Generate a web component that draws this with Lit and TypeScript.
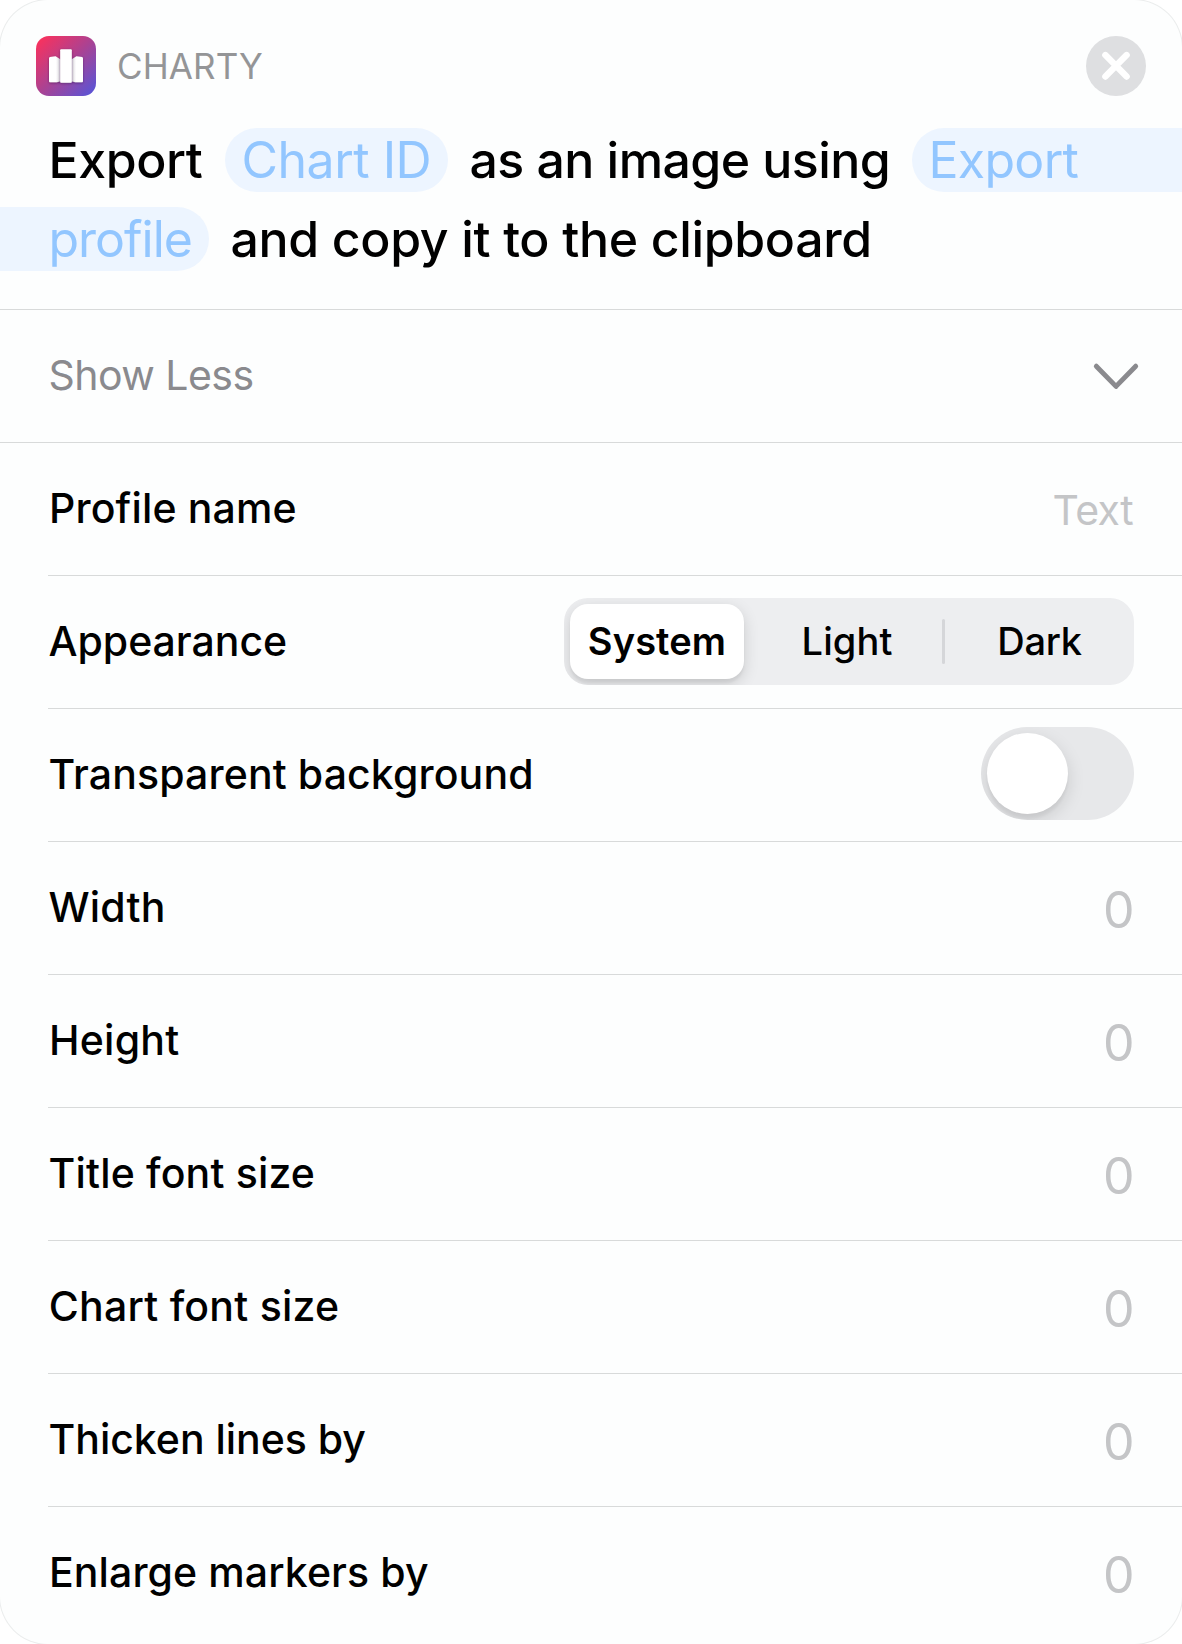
import { LitElement, html, css, svg, nothing } from "lit";
import { customElement, property, state } from "lit/decorators.js";
import { styleMap } from "lit/directives/style-map.js";
import { classMap } from "lit/directives/class-map.js";

interface Field {
  label: string;
  kind: "text" | "number" | "segments" | "switch";
  tracking: number;
  /** Optical indent of the first letter, in px. */
  indent: number;
}

const FIELDS: Field[] = [
  { label: "Profile name", kind: "text", tracking: 0.15, indent: 1 },
  { label: "Appearance", kind: "segments", tracking: -0.03, indent: 0.5 },
  { label: "Transparent background", kind: "switch", tracking: 0.12, indent: 0.5 },
  { label: "Width", kind: "number", tracking: 0.2, indent: 0.5 },
  { label: "Height", kind: "number", tracking: 0.25, indent: 1 },
  { label: "Title font size", kind: "number", tracking: 0.18, indent: 0.5 },
  { label: "Chart font size", kind: "number", tracking: 0.25, indent: 0.7 },
  { label: "Thicken lines by", kind: "number", tracking: -0.02, indent: 0.5 },
  { label: "Enlarge markers by", kind: "number", tracking: 0.1, indent: 1 },
];

@customElement("charty-icon")
class ChartyIcon extends LitElement {
  static styles = css`
    :host { display: block; width: 60px; height: 60px; }
    svg { display: block; }
  `;
  render() {
    return html`<svg width="60" height="60" viewBox="0 0 60 60">
      ${svg`
      <defs>
        <linearGradient id="bg" x1="0" y1="0" x2="1" y2="1">
          <stop offset="0.04" stop-color="#fb315c" />
          <stop offset="0.5" stop-color="#ab4292" />
          <stop offset="0.96" stop-color="#5954d6" />
        </linearGradient>
        <linearGradient id="left" x1="0" x2="1">
          <stop offset="0.6" stop-color="#fff" />
          <stop offset="1" stop-color="#d5d0d8" />
        </linearGradient>
        <linearGradient id="right" x1="1" x2="0">
          <stop offset="0.6" stop-color="#fff" />
          <stop offset="1" stop-color="#d5d0d8" />
        </linearGradient>
        <filter id="shade" x="-30%" y="-30%" width="160%" height="160%">
          <feDropShadow dx="0" dy="0.8" stdDeviation="0.9" flood-color="#2a1040" flood-opacity="0.5" />
        </filter>
      </defs>
      <rect width="60" height="60" rx="13" fill="url(#bg)" />
      <g filter="url(#shade)">
        <path d="M13 22.2Q13 21.3 14 21.1L19.6 20.2L24.6 23.4V45.2L20.8 46.2H14Q13 46.2 13 45.2Z" fill="url(#left)" />
        <path d="M47 22.2Q47 21.3 46 21.1L40.4 20.2L35.4 23.4V45.2L39.2 46.2H46Q47 46.2 47 45.2Z" fill="url(#right)" />
      </g>
      <rect x="24.2" y="13.3" width="11.6" height="33.4" rx="0.9" fill="#fff" filter="url(#shade)" />`}
    </svg>`;
  }
}

@customElement("segmented-control")
class SegmentedControl extends LitElement {
  static styles = css`
    :host { display: block; padding-bottom: 2px; }
    .track {
      box-sizing: border-box;
      display: grid;
      grid-template-columns: 174px 8px 190px 3px 189px;
      align-items: center;
      width: 570px;
      height: 87px;
      padding: 6px 0 6px 6px;
      border-radius: 24px;
      background: #edeef0;
      overflow: hidden;
    }
    .segment {
      grid-row: 1;
      box-sizing: border-box;
      height: 75px;
      line-height: 75px;
      font-size: 38px;
      font-weight: 500;
      text-align: center;
      color: #000;
    }
    .first { grid-column: 1; }
    .second { grid-column: 3; letter-spacing: 0.1px; }
    .third { grid-column: 5; letter-spacing: -0.25px; }
    .selected {
      border-radius: 18px;
      background: #fff;
      font-weight: 600;
      letter-spacing: 0.1px;
      box-shadow: 0 5px 16px rgba(0, 0, 0, 0.14), 0 4px 3px rgba(0, 0, 0, 0.05);
    }
    .divider { grid-column: 4; grid-row: 1; height: 45px; border-radius: 2px; background: #d5d6d9; }
  `;
  @state() private selected = 0;
  render() {
    const names = ["System", "Light", "Dark"];
    return html`<div class="track">
      ${names.map(
        (name, i) => html`<div
          class=${classMap({ segment: true, first: i === 0, second: i === 1, third: i === 2, selected: i === this.selected })}
          @click=${() => (this.selected = i)}
        >${name}</div>`,
      )}
      <div class="divider"></div>
    </div>`;
  }
}

@customElement("toggle-switch")
class ToggleSwitch extends LitElement {
  static styles = css`
    :host { display: block; padding-bottom: 4px; }
    .track {
      box-sizing: border-box;
      display: flex;
      align-items: center;
      width: 153px;
      height: 93px;
      padding: 6px;
      border-radius: 47px;
      background: #e7e8ea;
      overflow: hidden;
    }
    .knob {
      width: 81px;
      height: 81px;
      border-radius: 50%;
      background: #fff;
      box-shadow: 0 6px 18px rgba(0, 0, 0, 0.13), 0 5px 3px rgba(0, 0, 0, 0.04);
    }
  `;
  render() {
    return html`<div class="track"><div class="knob"></div></div>`;
  }
}

@customElement("field-row")
class FieldRow extends LitElement {
  static styles = css`
    :host { display: block; }
    .row {
      box-sizing: border-box;
      display: flex;
      align-items: center;
      justify-content: space-between;
      height: 133px;
      margin-left: 48px;
      padding-right: 48px;
      border-bottom: 1px solid #d8dada;
    }
    .last { border-bottom-color: transparent; }
    .label { padding-bottom: 2px; font-size: 41px; font-weight: 500; line-height: 50px; color: #000; white-space: nowrap; }
    .placeholder { color: #c4c5c7; line-height: 60px; }
    .text { padding: 2px 1px 0 0; font-size: 41px; letter-spacing: -0.6px; }
    .number { padding-top: 4px; font-size: 50px; letter-spacing: -0.5px; }
  `;
  @property({ attribute: false }) field!: Field;
  @property({ type: Boolean }) last = false;

  private control() {
    switch (this.field.kind) {
      case "text": return html`<span class="placeholder text">Text</span>`;
      case "number": return html`<span class="placeholder number">0</span>`;
      case "segments": return html`<segmented-control></segmented-control>`;
      case "switch": return html`<toggle-switch></toggle-switch>`;
      default: return nothing;
    }
  }
  render() {
    const { label, tracking, indent } = this.field;
    return html`<div class=${classMap({ row: true, last: this.last })}>
      <span class="label" style=${styleMap({ letterSpacing: `${tracking}px`, paddingLeft: `${indent}px` })}>${label}</span>
      ${this.control()}
    </div>`;
  }
}

@customElement("app-root")
class AppRoot extends LitElement {
  static styles = css`
    :host {
      display: block;
      height: 1644px;
      overflow: hidden;
      background: #fff;
      font-family: Inter, "Liberation Sans", sans-serif;
    }
    .card {
      display: flex;
      flex-direction: column;
      height: 1644px;
      border-radius: 48px;
      background: #fdfefe;
      box-shadow: 0 0 0 1px #ebeded;
    }
    .header { display: flex; align-items: center; height: 60px; padding: 36px 36px 0; }
    .app-name { flex: 1; margin-left: 21px; font-size: 35px; letter-spacing: 0.1px; color: #949597; }
    .close { display: block; }
    .summary {
      display: grid;
      row-gap: 15px;
      padding-top: 32px;
      height: 181px;
      align-content: start;
      border-bottom: 1px solid #d8dada;
      font-size: 50px;
      line-height: 64px;
      font-weight: 500;
      color: #000;
      white-space: pre;
    }
    .line { display: grid; height: 64px; }
    .line-one { grid-template-columns: 177px 223px 464px 1fr; padding-left: 48px; }
    .line-two { grid-template-columns: 209px 1fr; }
    .word { padding-left: 0.5px; letter-spacing: -0.4px; }
    .middle { padding-left: 21.5px; letter-spacing: -0.56px; }
    .tail { padding-left: 21.5px; letter-spacing: -0.34px; }
    .token { background: #edf5ff; color: #92c6ff; font-weight: 400; }
    .chart { padding-left: 16.5px; border-radius: 32px; letter-spacing: -0.5px; }
    .profile-start { padding-left: 16.5px; border-radius: 32px 0 0 32px; letter-spacing: -0.7px; }
    .profile-end { padding-left: 48.5px; border-radius: 0 32px 32px 0; letter-spacing: -1px; }
    .disclosure {
      box-sizing: border-box;
      display: flex;
      align-items: center;
      justify-content: space-between;
      height: 133px;
      padding: 0 42px 0 48px;
      border-bottom: 1px solid #d8dada;
      color: #8a8a8e;
    }
    .less { padding: 0 0 2px 0.5px; font-size: 41px; line-height: 50px; letter-spacing: -0.53px; }
    .chevron { display: block; }
  `;
  render() {
    return html`<div class="card">
      <div class="header">
        <charty-icon></charty-icon>
        <span class="app-name">CHARTY</span>
        <svg class="close" width="60" height="60" viewBox="0 0 60 60">
          <circle cx="30" cy="30" r="30" fill="#dedfe1" />
          <path d="M19.4 19.1L40.6 40.5M40.6 19.1L19.4 40.5" stroke="#fff" stroke-width="6.4" stroke-linecap="round" />
        </svg>
      </div>
      <div class="summary">
        <div class="line line-one"><span class="word">Export</span><span class="token chart">Chart ID</span><span class="middle">as an image using</span><span class="token profile-start">Export</span></div>
        <div class="line line-two"><span class="token profile-end">profile</span><span class="tail">and copy it to the clipboard</span></div>
      </div>
      <div class="disclosure">
        <span class="less">Show Less</span>
        <svg class="chevron" width="48" height="30" viewBox="0 0 48 30" fill="none" stroke="#8a8a8e" stroke-width="4.9" stroke-linecap="round" stroke-linejoin="round">
          <path d="M4.3 5.2L24 25.4L43.7 5.2" />
        </svg>
      </div>
      ${FIELDS.map((field, i) => html`<field-row .field=${field} ?last=${i === FIELDS.length - 1}></field-row>`)}
    </div>`;
  }
}
